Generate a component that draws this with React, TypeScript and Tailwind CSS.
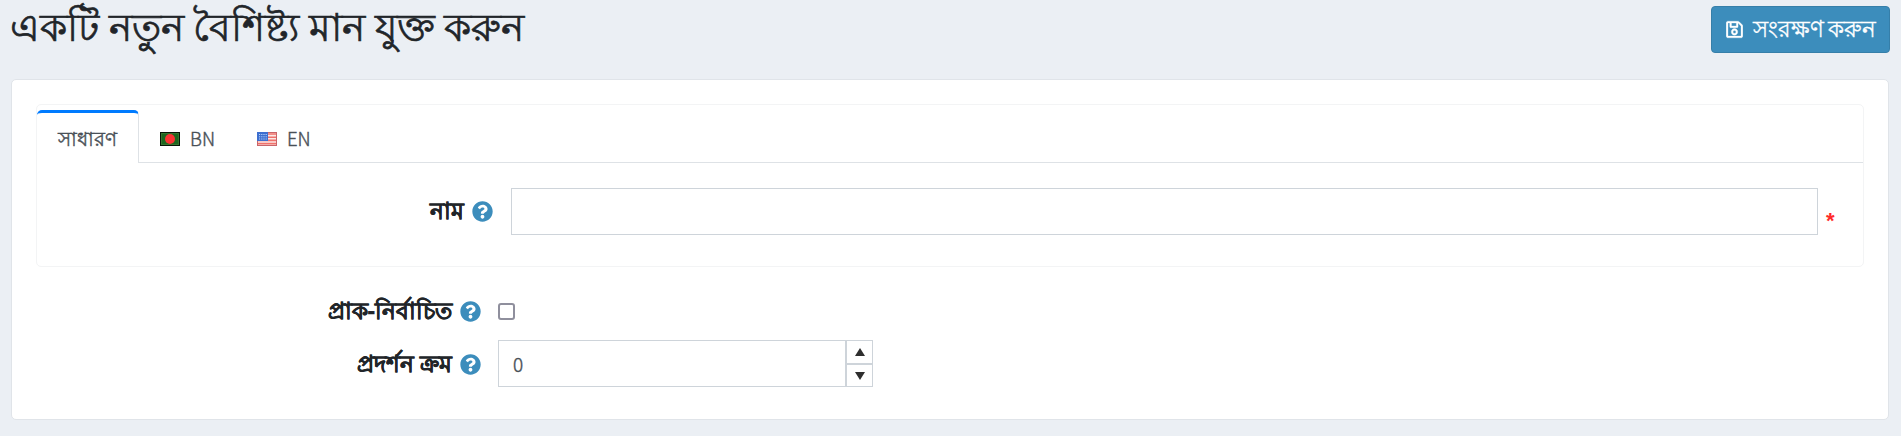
import type { ReactNode } from "react";

function HelpIcon() {
  return (
    <svg viewBox="0 0 512 512" className="size-[21px] shrink-0 fill-[#3c8dbc]">
      <path d="M504 256c0 136.997-111.043 248-248 248S8 392.997 8 256C8 119.083 119.043 8 256 8s248 111.083 248 248zM262.655 90c-54.497 0-89.255 22.957-116.549 63.758-3.536 5.286-2.353 12.415 2.715 16.258l34.699 26.31c5.205 3.947 12.621 3.008 16.665-2.122 17.864-22.658 30.113-35.797 57.303-35.797 20.429 0 45.698 13.148 45.698 32.958 0 14.976-12.363 22.667-32.534 33.976C247.128 238.528 216 254.941 216 296v4c0 6.627 5.373 12 12 12h56c6.627 0 12-5.373 12-12v-1.333c0-28.462 83.186-29.647 83.186-106.667 0-58.002-60.165-102-116.531-102zM256 338c-25.365 0-46 20.635-46 46 0 25.364 20.635 46 46 46s46-20.636 46-46c0-25.364-20.635-46-46-46z" />
    </svg>
  );
}

function SaveIcon() {
  return (
    <svg viewBox="0 0 448 512" className="h-[19px] w-[17px] fill-white stroke-white" strokeWidth="8">
      <path d="M433.941 129.941l-83.882-83.882A48 48 0 0 0 316.118 32H48C21.49 32 0 53.49 0 80v352c0 26.51 21.49 48 48 48h352c26.51 0 48-21.49 48-48V163.882a48 48 0 0 0-14.059-33.941zM272 80v80H144V80h128zm122 352H54a6 6 0 0 1-6-6V86a6 6 0 0 1 6-6h42v104c0 13.255 10.745 24 24 24h176c13.255 0 24-10.745 24-24V83.882l78.243 78.243a6 6 0 0 1 1.757 4.243V426a6 6 0 0 1-6 6zM224 232c-48.523 0-88 39.477-88 88s39.477 88 88 88 88-39.477 88-88-39.477-88-88-88zm0 128c-22.056 0-40-17.944-40-40s17.944-40 40-40 40 17.944 40 40-17.944 40-40 40z" />
    </svg>
  );
}

function FlagBN() {
  return (
    <svg viewBox="0 0 20 14" className="h-[14px] w-5">
      <rect width="20" height="14" fill="#071507" />
      <rect x="1" y="1" width="18" height="12" fill="#38742f" />
      <rect x="2" y="2" width="16" height="10" fill="#1d671f" />
      <circle cx="10" cy="7" r="5" fill="#fb3434" />
    </svg>
  );
}

function FlagUS() {
  return (
    <svg viewBox="0 0 20 14" className="h-[14px] w-5">
      <rect width="20" height="14" fill="#c9656a" />
      <rect x="1" y="1" width="18" height="12" fill="#fbe9e6" />
      <path d="M1 2h18M1 5.2h18M1 8.4h18M1 11.6h18" stroke="#f0716b" strokeWidth="1.6" />
      <rect width="11" height="9" fill="#3d6fd0" />
      <path d="M2 2.5h8M2 4.8h8M2 7h8" stroke="#b9d3fa" strokeWidth="1" strokeDasharray="1.2 1" />
    </svg>
  );
}

function Label({ children, className }: { children: ReactNode; className: string }) {
  return (
    <div className={`flex items-center justify-end gap-2 ${className}`}>
      <label className="pb-[3px] text-[23.3px] leading-[30px] font-bold whitespace-nowrap [-webkit-text-stroke:0.3px_#212529]">
        {children}
      </label>
      <HelpIcon />
    </div>
  );
}

export default function App() {
  return (
    <div className="h-[436px] overflow-hidden bg-[#ebeff4] pr-3 pl-[11px] font-['Noto_Sans',sans-serif] text-[#212529]">
      <header className="flex h-[79px] items-start justify-between">
        <h1 className="-ml-px text-[39px] leading-[51px] whitespace-nowrap [-webkit-text-stroke:0.7px_#212529] [word-spacing:-0.5px]">
          একটি নতুন বৈশিষ্ট্য মান যুক্ত করুন
        </h1>
        <button className="mt-[6px] -mr-px flex h-[47px] w-[179px] items-center rounded-[4px] border border-[#367fa9] bg-[#3c8dbc] pl-[14px] text-white">
          <SaveIcon />
          <span className="ml-[10px] pb-[2px] text-[22.6px] leading-[30px] whitespace-nowrap [-webkit-text-stroke:0.3px_white] [word-spacing:-2px]">সংরক্ষণ করুন</span>
        </button>
      </header>

      <main className="flex h-[341px] flex-col rounded-[5px] border border-[#e0e4e9] bg-white pt-6 pr-6 pl-6">
        <section className="h-[163px] rounded-[5px] border border-[#f3f4f5]">
          <nav className="flex h-[58px] items-end border-b border-[#dee2e6] text-[#495057]">
            <div className="-mb-px flex h-[53px] w-[102px] shrink-0 items-center justify-center rounded-t-[5px] border-t-[3px] border-r border-t-[#007bff] border-r-[#dee2e6] bg-white text-[20.3px]">
              <span className="whitespace-nowrap [-webkit-text-stroke:0.4px_#495057]">সাধারণ</span>
            </div>
            <div className="ml-[21px] flex h-[46px] items-center gap-[10px] font-['Noto_Sans_CJK_JP',sans-serif] text-[18.5px]">
              <FlagBN />
              <span className="w-[25px] font-light [-webkit-text-stroke:0.4px_#495057]">BN</span>
            </div>
            <div className="ml-[42px] flex h-[46px] items-center gap-[10px] font-['Noto_Sans_CJK_JP',sans-serif] text-[18.5px]">
              <FlagUS />
              <span className="font-light [-webkit-text-stroke:0.4px_#495057]">EN</span>
            </div>
          </nav>
          <div className="flex pt-[25px]">
            <Label className="h-[47px] w-[456px]">নাম</Label>
            <input aria-label="নাম" className="ml-[18px] h-[47px] w-[1307px] border border-[#ced4da] bg-white px-4 outline-none" />
            <span className="mt-[20px] ml-[8px] font-['Liberation_Sans',sans-serif] text-[22px] leading-[26px] font-bold text-[#ff2a2a]">*</span>
          </div>
        </section>

        <div className="mt-[27px] flex h-[34px] items-center">
          <Label className="w-[445px]">প্রাক-নির্বাচিত</Label>
          <input type="checkbox" className="ml-[17px] size-[17px] appearance-none rounded-[3px] border-2 border-[#8f8f9d] bg-white" />
        </div>
        <div className="mt-[12px] flex h-[47px] items-center">
          <Label className="w-[445px] pt-px">প্রদর্শন ক্রম</Label>
          <div className="ml-[17px] flex h-[47px] w-[375px] border border-[#ced4da]">
            <div className="flex w-[347px] items-center pt-px pl-[14px] font-['Noto_Sans_CJK_JP',sans-serif] text-[19px] font-light text-[#495057] [-webkit-text-stroke:0.4px_#495057]">0</div>
            <div className="flex w-[27px] flex-col border-l-2 border-[#ced4da]">
              <button aria-label="+" className="flex h-[24px] items-center justify-center border-b-2 border-[#ced4da]">
                <svg viewBox="0 0 10 8" className="h-2 w-[10px] fill-[#2e2e2e]"><path d="M5 0l5 8H0z" /></svg>
              </button>
              <button aria-label="−" className="flex h-[21px] items-center justify-center">
                <svg viewBox="0 0 10 8" className="h-2 w-[10px] fill-[#2e2e2e]"><path d="M0 0h10L5 8z" /></svg>
              </button>
            </div>
          </div>
        </div>
      </main>
    </div>
  );
}
